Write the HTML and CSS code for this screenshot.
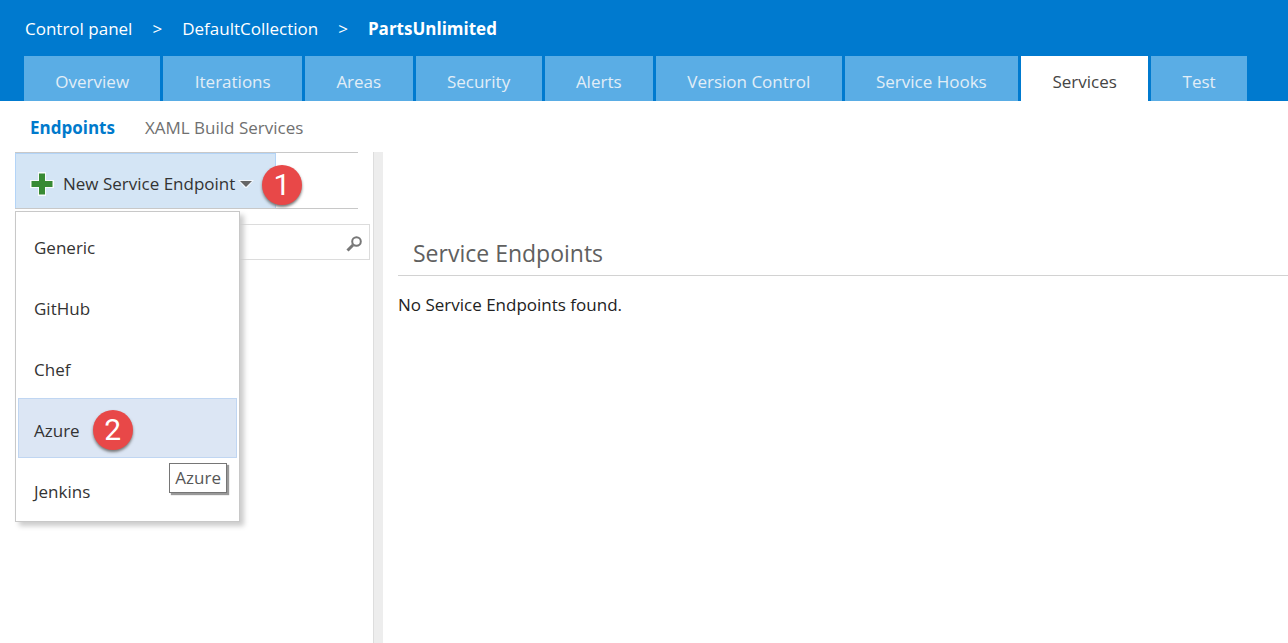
FILE: index.html
```html
<!DOCTYPE html>
<html lang="en">
<head>
<meta charset="utf-8">
<title>Services - PartsUnlimited</title>
<link rel="stylesheet" href="styles.css">
</head>
<body>
<header class="header">
  <nav class="breadcrumb" aria-label="Breadcrumb">
    <a href="#">Control panel</a><span>&gt;</span><a href="#">DefaultCollection</a><span>&gt;</span><a href="#" class="current">PartsUnlimited</a>
  </nav>
  <nav class="tabs" aria-label="Sections">
    <a href="#">Overview</a>
    <a href="#">Iterations</a>
    <a href="#">Areas</a>
    <a href="#">Security</a>
    <a href="#">Alerts</a>
    <a href="#">Version Control</a>
    <a href="#">Service Hooks</a>
    <a href="#" class="active" aria-current="page">Services</a>
    <a href="#">Test</a>
  </nav>
</header>
<nav class="subnav" aria-label="Services">
  <a href="#" class="active">Endpoints</a>
  <a href="#">XAML Build Services</a>
</nav>
<main class="content">
  <aside class="side">
    <div class="toolbar">
      <button type="button" class="new-button" aria-haspopup="menu" aria-expanded="true">
        <svg class="plus" viewBox="0 0 24 24" aria-hidden="true"><path d="M8 0h8v8h8v8h-8v8H8v-8H0V8h8z" fill="#fff" opacity=".8"/><path d="M9 1.500h6V9h7.500v6H15v7.500H9V15H1.500V9H9z" fill="#388a34"/></svg>
        <span>New Service Endpoint</span>
        <svg class="caret" viewBox="0 0 16 10" aria-hidden="true"><path d="M0 1h16L9 9H7z" fill="#fff" opacity=".7"/><path d="M2 2h12L8 8z" fill="#666"/></svg>
      </button>
      <span class="badge badge-one">1</span>
    </div>
    <div class="search">
      <input type="text" aria-label="Search endpoints">
      <button type="button" aria-label="Search"><svg viewBox="0 0 18 18" aria-hidden="true"><circle cx="11.500" cy="6.500" r="4.300" fill="none" stroke="#777" stroke-width="2"/><path d="M8 10L2.500 15.500" stroke="#777" stroke-width="3"/></svg></button>
    </div>
    <div class="menu" role="menu">
      <button type="button" role="menuitem">Generic</button>
      <button type="button" role="menuitem">GitHub</button>
      <button type="button" role="menuitem">Chef</button>
      <button type="button" role="menuitem" class="hover">Azure<span class="badge">2</span></button>
      <button type="button" role="menuitem">Jenkins</button>
      <span class="tooltip" role="tooltip">Azure</span>
    </div>
  </aside>
  <div class="splitter"></div>
  <section class="detail">
    <h1>Service Endpoints</h1>
    <p>No Service Endpoints found.</p>
  </section>
</main>
</body>
</html>
```
FILE: styles.css
```css
* { box-sizing: border-box; }
body {
  margin: 0;
  min-height: 100vh;
  display: flex;
  flex-direction: column;
  background: #fff;
  color: #333;
  font: 17px/24px "Open Sans", "Noto Sans", sans-serif;
}
a { text-decoration: none; color: inherit; white-space: nowrap; }
button, input { font: inherit; color: inherit; }
.header { background: #007acf; }
.breadcrumb {
  display: flex;
  gap: 20px;
  height: 56px;
  padding: 2px 25px 0;
  align-items: center;
  color: #fff;
}
.breadcrumb .current { font-weight: 700; }
.tabs { display: flex; gap: 3px; padding: 0 41px 0 24px; }
.tabs a {
  flex: 1 0 auto;
  padding: 14px 31px 7px;
  background: #5aade5;
  color: #e2eef7;
  text-align: center;
}
.tabs .active { background: #fff; color: #444; }
.subnav {
  display: flex;
  gap: 30px;
  padding: 15px 30px 12px;
  color: #707070;
}
.subnav .active { color: #007acc; font-weight: 700; }
.content { display: flex; flex: 1; }
.side { position: relative; width: 373px; padding-left: 15px; }
.toolbar {
  position: relative;
  display: flex;
  height: 57px;
  margin-right: 15px;
  border: solid #c8c8c8;
  border-width: 1px 0;
}
.new-button {
  display: flex;
  align-items: center;
  width: 261px;
  padding: 6px 0 0 14px;
  border: 1px solid #b3d4f7;
  border-bottom: 0;
  background: #d4e5f5;
  white-space: nowrap;
}
.plus { width: 24px; height: 24px; margin-right: 9px; }
.caret { width: 16px; height: 10px; margin-left: 3px; }
.badge {
  display: flex;
  align-items: center;
  justify-content: center;
  width: 40px;
  height: 40px;
  border-radius: 50%;
  background: #e84848;
  color: #fff;
  font: 30px/40px Roboto, sans-serif;
  box-shadow: 0 2px 3px #777;
}
.badge-one { position: absolute; left: 247px; top: 12px; }
.search {
  display: flex;
  height: 36px;
  margin: 15px 3px 0 0;
  border: 1px solid #dcdcdc;
}
.search input { flex: 1; min-width: 0; border: 0; background: none; }
.search button { width: 30px; padding: 9px 0 0; border: 0; background: none; }
.search svg { width: 18px; height: 18px; }
.menu {
  position: absolute;
  left: 15px;
  top: 59px;
  width: 225px;
  display: grid;
  gap: 1px;
  padding: 3px 2px 2px;
  border: 1px solid #c8c8c8;
  background: #fff;
  box-shadow: 4px 4px 5px #ccc;
}
.menu button {
  display: flex;
  align-items: center;
  gap: 13px;
  height: 60px;
  padding: 5px 15px 0;
  border: 1px solid transparent;
  background: none;
}
.menu .hover { border-color: #c0d6f2; background: #dce6f4; }
.menu .hover .badge { margin-bottom: 1px; }
.tooltip {
  position: absolute;
  right: 12px;
  bottom: 28px;
  padding: 2px 5px;
  border: 1px solid #767676;
  background: #fff;
  color: #575757;
  box-shadow: 2px 2px 1px #999;
}
.splitter { width: 10px; background: #ededed; border-left: 1px solid #ddd; }
.detail { flex: 1; padding: 82px 0 0 15px; }
h1 {
  margin: 0 0 17px;
  padding: 3px 15px 6px;
  border-bottom: 1px solid #d2d2d2;
  color: #606060;
  font-size: 23px;
  font-weight: 400;
  line-height: 32px;
}
p { margin: 0; color: #222; }
```
